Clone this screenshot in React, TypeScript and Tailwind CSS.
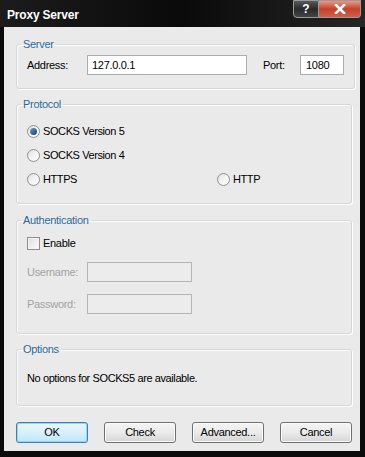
import React from 'react';

const font = { fontFamily: '"Liberation Sans", Arial, sans-serif' };

const Radio: React.FC<{ checked?: boolean; label: string }> = ({ checked, label }) => (
    <label className="flex items-center gap-[3px] h-[24px]">
        <span className="w-[13px] h-[13px] rounded-full border border-[#8e8f8f] bg-gradient-to-br from-[#e0e0e0] via-[#f4f4f4] to-[#ffffff] flex items-center justify-center">
            {checked && <span className="w-[7px] h-[7px] rounded-full bg-gradient-to-br from-[#6f9fd0] to-[#0e3b6e]" />}
        </span>
        <span className="text-[11px] text-black tracking-[-0.4px]">{label}</span>
    </label>
);

const Group: React.FC<{ title: string; className?: string; children: React.ReactNode }> = ({ title, className, children }) => (
    <fieldset className={`border border-[#d3d7da] rounded-[3px] shadow-[inset_1px_1px_0_#ffffff,1px_1px_0_#ffffff] px-[10px] ${className ?? ''}`}>
        <legend className="ml-[-6px] px-[2px] text-[11px] leading-[14px] text-[#2a6a9a] tracking-[-0.3px]">{title}</legend>
        {children}
    </fieldset>
);

const Button: React.FC<{ label: string; focused?: boolean }> = ({ label, focused }) => (
    <button
        className={`w-[72px] h-[21px] rounded-[3px] text-[11px] text-black tracking-[-0.3px] border ${
            focused
                ? 'border-[#3c7fb1] bg-gradient-to-b from-[#eaf6fd] via-[#d9f0fc] to-[#bee6fd] shadow-[inset_0_0_0_1px_#97d6f5]'
                : 'border-[#707070] bg-gradient-to-b from-[#f4f4f4] via-[#ebebeb] to-[#d4d4d4] shadow-[inset_0_0_0_1px_#fcfcfc]'
        }`}
    >
        {label}
    </button>
);

export default function App() {
    return (
        <div className="w-[365px] h-[457px] bg-[#0b0b0b] flex flex-col" style={font}>
            {/* title bar */}
            <div className="h-[27px] flex items-start justify-between bg-gradient-to-r from-[#1c1c1c] via-[#0a0a0a] to-[#262626]">
                <span className="mt-[6px] ml-[7px] text-[12px] font-bold text-white tracking-[-0.2px]">Proxy Server</span>
                <div className="flex mr-[4px]">
                    <div className="w-[26px] h-[18px] rounded-bl-[4px] border border-[#9a9a9a] bg-gradient-to-b from-[#5a5a5a] via-[#2a2a2a] to-[#444444] flex items-center justify-center text-white text-[12px] font-bold">?</div>
                    <div className="w-[42px] h-[18px] rounded-br-[4px] border border-l-0 border-[#9a9a9a] bg-gradient-to-b from-[#e59a8a] via-[#c4402a] to-[#d0604a] flex items-center justify-center">
                        <svg width="12" height="10" viewBox="0 0 12 10">
                            <path d="M2 1 L10 9 M10 1 L2 9" stroke="#ffffff" strokeWidth="2.6" strokeLinecap="square" />
                        </svg>
                    </div>
                </div>
            </div>
            {/* client */}
            <div className="ml-[4px] mr-[5px] h-[424px] bg-[#eaeaea] pl-[12px] pr-[8px] flex flex-col">
                <Group title="Server" className="mt-[10px] h-[52px]">
                    <div className="mt-[4px] flex items-center h-[20px]">
                        <span className="w-[60px] text-[11px] tracking-[-0.3px]">Address:</span>
                        <div className="w-[160px] h-[20px] border border-[#abadb3] bg-white text-[11px] tracking-[-0.3px] pl-[4px] flex items-center">127.0.0.1</div>
                        <span className="ml-[16px] w-[37px] text-[11px] tracking-[-0.3px]">Port:</span>
                        <div className="w-[44px] h-[20px] border border-[#abadb3] bg-white text-[11px] tracking-[-0.3px] pl-[5px] flex items-center">1080</div>
                    </div>
                </Group>
                <Group title="Protocol" className="mt-[8px] h-[107px]">
                    <div className="mt-[8px] grid grid-cols-[190px_1fr]">
                        <Radio checked label="SOCKS Version 5" />
                        <div />
                        <Radio label="SOCKS Version 4" />
                        <div />
                        <Radio label="HTTPS" />
                        <Radio label="HTTP" />
                    </div>
                </Group>
                <Group title="Authentication" className="mt-[9px] h-[121px]">
                    <div className="mt-[6px] flex items-center gap-[3px] h-[20px]">
                        <span className="w-[13px] h-[13px] border border-[#8e8f8f] bg-gradient-to-br from-[#dcdcdc] via-[#eeeeee] to-[#fbfbfb] shadow-[inset_0_0_0_1px_#f4f4f4]" />
                        <span className="text-[11px] tracking-[-0.3px]">Enable</span>
                    </div>
                    <div className="mt-[9px] flex items-center h-[20px]">
                        <span className="w-[60px] text-[11px] text-[#a3a3a3] tracking-[-0.3px]">Username:</span>
                        <div className="w-[105px] h-[20px] border border-[#b4b4b4] bg-[#ececec]" />
                    </div>
                    <div className="mt-[12px] flex items-center h-[20px]">
                        <span className="w-[60px] text-[11px] text-[#a3a3a3] tracking-[-0.3px]">Password:</span>
                        <div className="w-[105px] h-[20px] border border-[#b4b4b4] bg-[#ececec]" />
                    </div>
                </Group>
                <Group title="Options" className="mt-[8px] h-[64px]">
                    <div className="mt-[15px] text-[11px] leading-[14px] tracking-[-0.4px]">No options for SOCKS5 are available.</div>
                </Group>
                <div className="mt-[16px] flex justify-between">
                    <Button label="OK" focused />
                    <Button label="Check" />
                    <Button label="Advanced..." />
                    <Button label="Cancel" />
                </div>
            </div>
        </div>
    );
}
